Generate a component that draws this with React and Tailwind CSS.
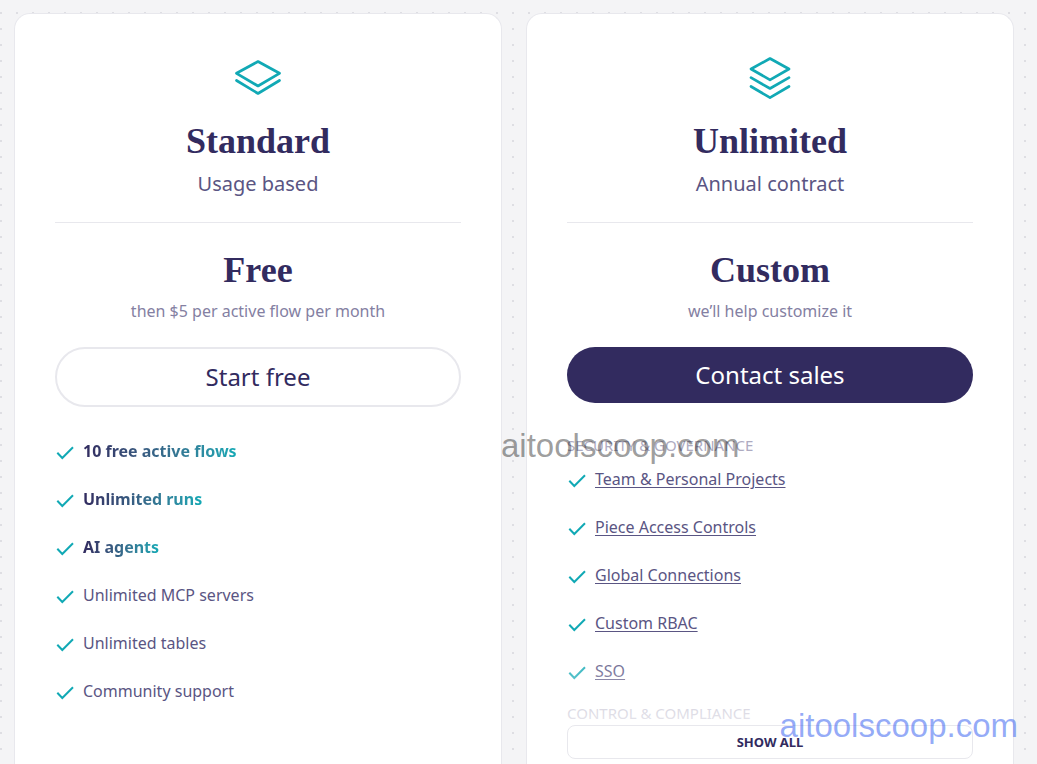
import React from 'react';

const standardFeatures = [
    { label: '10 free active flows', highlight: true },
    { label: 'Unlimited runs', highlight: true },
    { label: 'AI agents', highlight: true },
    { label: 'Unlimited MCP servers' },
    { label: 'Unlimited tables' },
    { label: 'Community support' },
];

const securityFeatures = [
    'Team & Personal Projects',
    'Piece Access Controls',
    'Global Connections',
    'Custom RBAC',
    'SSO',
];

const LayersTwo = () => (
    <svg viewBox="0 0 48 48" className="size-12" fill="none" stroke="#11a9b5" strokeWidth="2.7" strokeLinecap="round" strokeLinejoin="round" aria-hidden="true">
        <path d="M24 8.5 45.5 20.3 24 33 2.5 20.3Z" />
        <path d="M2.5 27.5 24 40.5 45.5 27.5" />
    </svg>
);

const LayersThree = () => (
    <svg viewBox="0 0 48 48" className="size-12" fill="none" stroke="#11a9b5" strokeWidth="2.7" strokeLinecap="round" strokeLinejoin="round" aria-hidden="true">
        <path d="M24 5.5 43 16 24 26.8 5 16Z" />
        <path d="M5 24.7 24 35.5 43 24.7" />
        <path d="M5 33.5 24 44.7 43 33.5" />
    </svg>
);

const Check = () => (
    <svg viewBox="0 0 20 20" className="size-5 shrink-0" fill="none" stroke="#11a9b5" strokeWidth="2" aria-hidden="true">
        <path d="M2.3 11.7 7.3 17 18 6.3" />
    </svg>
);

const PlanCard = ({ icon, name, billing, price, note, children }) => (
    <section className="bg-white border border-b-0 border-[#e8e8ed] rounded-t-2xl px-10 pt-[39px]">
        <header className="flex flex-col items-center text-center border-b border-[#e8e8ed] pb-[23px]">
            {icon}
            <h2 className="mt-5 font-['Liberation_Serif',serif] text-[36px] leading-10 font-bold">{name}</h2>
            <p className="mt-2 text-[20px] leading-[30px] text-[#5a5583]">{billing}</p>
        </header>
        <div className="pt-[27px] pb-[22px] text-center">
            <h3 className="font-['Liberation_Serif',serif] text-[36px] leading-10 font-bold">{price}</h3>
            <p className="mt-2 text-[16px] leading-[27px] text-[#8480a2]">{note}</p>
        </div>
        {children}
    </section>
);

const App = () => {
    return (
        <main className="relative h-screen overflow-hidden bg-[#f4f4f6] bg-[linear-gradient(transparent_2px,#f4f4f6_2px),linear-gradient(90deg,#dedee3_2px,transparent_2px)] bg-[size:16px_16px] bg-[position:0px_12px] font-['Noto_Sans',sans-serif] text-[#322b5f]">
            <div className="h-full grid grid-cols-2 gap-6 pt-[13px] pl-[14px] pr-[23px]">
                <PlanCard icon={<LayersTwo />} name="Standard" billing="Usage based" price="Free" note="then $5 per active flow per month">
                    <button type="button" className="w-full h-[60px] rounded-full border-2 border-[#e8e8ed] text-[24px] leading-8">Start free</button>
                    <ul className="mt-8 flex flex-col gap-6">
                        {standardFeatures.map(feature => (
                            <li key={feature.label} className="flex items-center gap-2 text-[16px] leading-6 text-[#5a5583]">
                                <Check />
                                {feature.highlight ? (
                                    <strong className="font-bold bg-linear-to-r from-[#322b5f] to-[#11a9b5] bg-clip-text text-transparent">{feature.label}</strong>
                                ) : (
                                    <span>{feature.label}</span>
                                )}
                            </li>
                        ))}
                    </ul>
                </PlanCard>

                <PlanCard icon={<LayersThree />} name="Unlimited" billing="Annual contract" price="Custom" note="we’ll help customize it">
                    <button type="button" className="w-full h-14 rounded-full bg-[#322b5f] text-white text-[24px] leading-8">Contact sales</button>
                    {/* collapsed feature list, fades out above the toggle */}
                    <div className="relative mt-8 h-[290px] overflow-hidden">
                        <h4 className="text-[15px] leading-5 text-[#aeabc1]">SECURITY &amp; GOVERNANCE</h4>
                        <ul className="mt-3 flex flex-col gap-6">
                            {securityFeatures.map(label => (
                                <li key={label} className="flex items-center gap-2 text-[16px] leading-6 text-[#5a5583]">
                                    <Check />
                                    <a href="#" className="underline underline-offset-2">{label}</a>
                                </li>
                            ))}
                        </ul>
                        <h4 className="mt-5 text-[15px] leading-5 text-[#aeabc1]">CONTROL &amp; COMPLIANCE</h4>
                        <div className="absolute inset-x-0 bottom-0 h-20 bg-linear-to-b from-white/0 to-white/70 pointer-events-none" />
                    </div>
                    <button type="button" className="w-full h-[34px] rounded-lg border border-[#e8e8ed] bg-white text-[13px] leading-4 font-bold">SHOW ALL</button>
                </PlanCard>
            </div>

            <span className="absolute left-[501px] top-[428px] font-['Liberation_Sans',sans-serif] text-[33px] leading-9 text-black/40 pointer-events-none">aitoolscoop.com</span>
            <span className="absolute right-[19px] top-[708px] font-['Liberation_Sans',sans-serif] text-[33px] leading-9 text-[#2b57f0]/50 pointer-events-none">aitoolscoop.com</span>
        </main>
    );
};

export default App;
